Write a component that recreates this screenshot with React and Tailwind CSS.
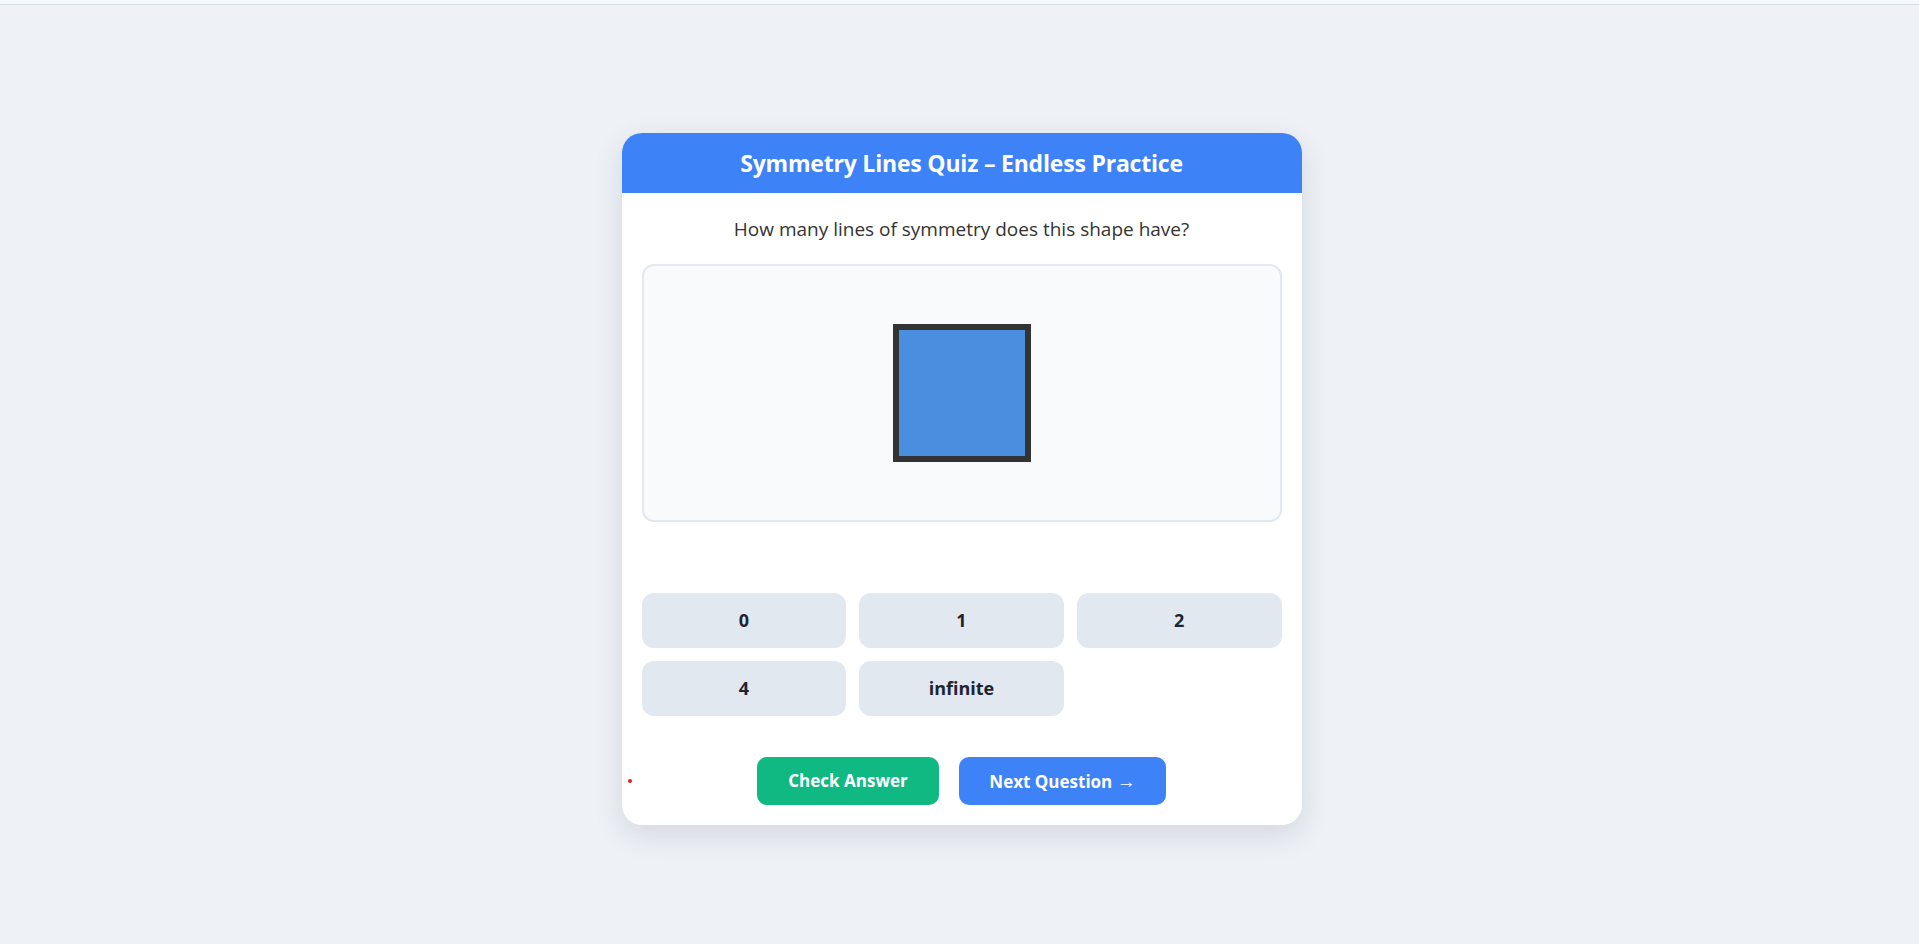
const options = ['0', '1', '2', '4', 'infinite'];

export default function App() {
  return (
    <div
      className="min-h-screen bg-[#eef2f7]"
      style={{ fontFamily: '"Open Sans", "Noto Sans", sans-serif' }}
    >
      <div className="h-[5px] bg-[#f3f8fc] border-b border-[#d9dee4]" />

      <div className="pt-[128px] pb-10 pl-[4px]">
        <div className="relative mx-auto w-[680px] rounded-[20px] bg-white overflow-hidden shadow-[0_10px_30px_rgba(15,23,42,0.12)]">
          {/* Header */}
          <div className="h-[60px] bg-[#3d82f6] flex items-center justify-center">
            <h1 className="text-white font-bold text-[23px] tracking-[-0.2px]">
              Symmetry Lines Quiz – Endless Practice
            </h1>
          </div>

          <div className="px-5 pt-[23px] pb-5">
            <p className="text-center text-[19px] leading-[27px] text-[#333]">
              How many lines of symmetry does this shape have?
            </p>

            {/* Shape area */}
            <div className="mt-[21px] h-[258px] rounded-xl border-2 border-[#e2e8f0] bg-[#f8fafc] flex items-center justify-center">
              <div className="w-[138px] h-[138px] border-[6px] border-[#333] bg-[#4a8ee0]" />
            </div>

            {/* feedback spacer */}
            <div className="h-[71px]" />

            {/* Options */}
            <div className="grid grid-cols-3 gap-[13px]">
              {options.map((o) => (
                <button
                  key={o}
                  className="h-[55px] rounded-xl bg-[#e2e8f0] text-[18px] font-bold text-[#1e2430]"
                >
                  {o}
                </button>
              ))}
            </div>

            {/* Actions */}
            <div className="relative mt-[41px] flex justify-center gap-5">
              <span className="absolute left-[-14px] top-1/2 -translate-y-1/2 w-1 h-1 rounded-full bg-[#e11d1d]" />
              <button className="h-12 w-[182px] rounded-[10px] bg-[#10b981] text-white font-bold text-[17px]">
                Check Answer
              </button>
              <button className="h-12 w-[207px] rounded-[10px] bg-[#3d82f6] text-white font-bold text-[17px]">
                Next Question <span className="text-[19px]">→</span>
              </button>
            </div>
          </div>
        </div>
      </div>
    </div>
  );
}
